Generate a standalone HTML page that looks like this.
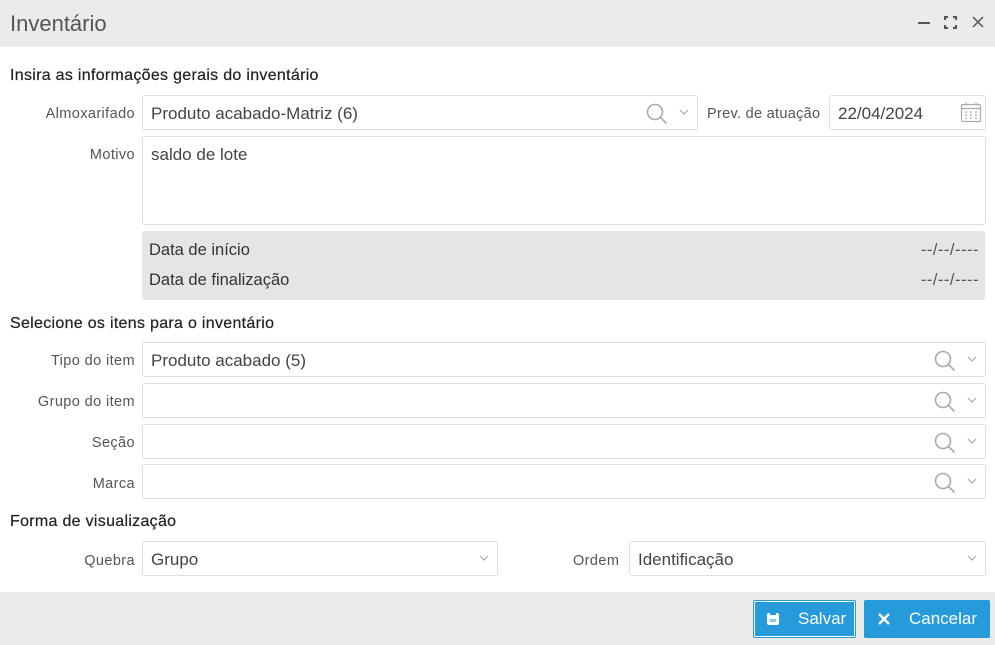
<!DOCTYPE html>
<html><head><meta charset="utf-8"><style>
*{box-sizing:border-box;margin:0;padding:0}
body{width:995px;height:645px;background:#fff;font-family:"Liberation Sans",sans-serif;position:relative;overflow:hidden;color:#333}
.a{position:absolute}
.tb{left:0;top:0;width:995px;height:47px;background:#ebebeb}
.title{left:10px;top:11px;font-size:22px;color:#555}
.h{font-size:16px;color:#222;left:10px;letter-spacing:0.3px;-webkit-text-stroke:0.2px #222}
.lbl{font-size:14.5px;color:#555;text-align:right;width:135px;left:0;letter-spacing:0.4px;margin-top:2px}
.in{border:1px solid #ddd;border-radius:3px;background:#fff;font-size:17px;color:#444;padding:8px 8px 0;height:35px}
.ic{position:absolute;top:6px}
.gray{background:#e5e5e5;border-radius:3px;left:142px;top:231px;width:843px;height:69px;font-size:16.5px;color:#333}
.ft{left:0;top:592px;width:995px;height:53px;background:#ebebeb}
.btn{background:#259bdb;color:#fff;font-size:17px;height:38px;top:600px;display:flex;align-items:center;border-radius:2px}
</style></head><body>
<div class="a tb"></div>
<div class="a title">Inventário</div>
<div class="a" style="left:918px;top:22px;width:12px;height:2px;background:#555"></div>
<svg class="a" style="left:944px;top:16px" width="13" height="13" viewBox="0 0 13 13" fill="none" stroke="#555" stroke-width="2"><path d="M1 4V1h3M9 1h3v3M12 9v3H9M4 12H1V9"/></svg>
<svg class="a" style="left:972px;top:16px" width="12" height="12" viewBox="0 0 12 12" stroke="#555" stroke-width="1.5"><path d="M1 1l10 10M11 1L1 11"/></svg>

<div class="a h" style="top:67px">Insira as informações gerais do inventário</div>
<div class="a lbl" style="top:104px">Almoxarifado</div>
<div class="a in" style="left:142px;top:95px;width:556px">Produto acabado-Matriz (6)
<svg class="ic" style="right:28px" width="24" height="24" viewBox="0 0 24 24" fill="none" stroke="#aaa" stroke-width="1.6"><circle cx="10" cy="10" r="7.5"/><path d="M15.5 15.5l6 6"/></svg>
<svg class="ic" style="right:8px;top:13px" width="10" height="6" viewBox="0 0 10 6" fill="none" stroke="#aaa" stroke-width="1.2"><path d="M1 1l4 4 4-4"/></svg></div>
<div class="a" style="left:707px;top:106px;font-size:14.5px;color:#555;letter-spacing:0.3px">Prev. de atuação</div>
<div class="a in" style="left:829px;top:95px;width:157px">22/04/2024
<svg class="ic" style="right:3px;top:5px" width="22" height="22" viewBox="0 0 22 22" fill="none" stroke="#aaa" stroke-width="1.2"><rect x="1.5" y="3.5" width="19" height="17" rx="1.5"/><path d="M1.5 7.5h19M6 1.5v3M16 1.5v3"/><path d="M5 11h2M10 11h2M15 11h2M5 14h2M10 14h2M15 14h2M5 17h2M10 17h2M15 17h2"/></svg></div>
<div class="a lbl" style="top:145px">Motivo</div>
<div class="a in" style="left:142px;top:136px;width:844px;height:89px">saldo de lote</div>
<div class="a gray">
<div class="a" style="left:7px;top:10px">Data de início</div><div class="a" style="right:6px;top:10px;color:#555;letter-spacing:0.5px">--/--/----</div>
<div class="a" style="left:7px;top:40px">Data de finalização</div><div class="a" style="right:6px;top:40px;color:#555;letter-spacing:0.5px">--/--/----</div>
</div>

<div class="a h" style="top:315px">Selecione os itens para o inventário</div>
<div class="a lbl" style="top:351px">Tipo do item</div>
<div class="a lbl" style="top:392px">Grupo do item</div>
<div class="a lbl" style="top:433px">Seção</div>
<div class="a lbl" style="top:474px">Marca</div>
<div class="a in" style="left:142px;top:342px;width:844px">Produto acabado (5)<svg class="ic" style="right:28px" width="24" height="24" viewBox="0 0 24 24" fill="none" stroke="#aaa" stroke-width="1.6"><circle cx="10" cy="10" r="7.5"/><path d="M15.5 15.5l6 6"/></svg><svg class="ic" style="right:8px;top:13px" width="10" height="6" viewBox="0 0 10 6" fill="none" stroke="#aaa" stroke-width="1.2"><path d="M1 1l4 4 4-4"/></svg></div>
<div class="a in" style="left:142px;top:383px;width:844px"><svg class="ic" style="right:28px" width="24" height="24" viewBox="0 0 24 24" fill="none" stroke="#aaa" stroke-width="1.6"><circle cx="10" cy="10" r="7.5"/><path d="M15.5 15.5l6 6"/></svg><svg class="ic" style="right:8px;top:13px" width="10" height="6" viewBox="0 0 10 6" fill="none" stroke="#aaa" stroke-width="1.2"><path d="M1 1l4 4 4-4"/></svg></div>
<div class="a in" style="left:142px;top:424px;width:844px"><svg class="ic" style="right:28px" width="24" height="24" viewBox="0 0 24 24" fill="none" stroke="#aaa" stroke-width="1.6"><circle cx="10" cy="10" r="7.5"/><path d="M15.5 15.5l6 6"/></svg><svg class="ic" style="right:8px;top:13px" width="10" height="6" viewBox="0 0 10 6" fill="none" stroke="#aaa" stroke-width="1.2"><path d="M1 1l4 4 4-4"/></svg></div>
<div class="a in" style="left:142px;top:464px;width:844px"><svg class="ic" style="right:28px" width="24" height="24" viewBox="0 0 24 24" fill="none" stroke="#aaa" stroke-width="1.6"><circle cx="10" cy="10" r="7.5"/><path d="M15.5 15.5l6 6"/></svg><svg class="ic" style="right:8px;top:13px" width="10" height="6" viewBox="0 0 10 6" fill="none" stroke="#aaa" stroke-width="1.2"><path d="M1 1l4 4 4-4"/></svg></div>

<div class="a h" style="top:513px">Forma de visualização</div>
<div class="a lbl" style="top:551px">Quebra</div>
<div class="a in" style="left:142px;top:541px;width:356px">Grupo<svg class="ic" style="right:8px;top:13px" width="10" height="6" viewBox="0 0 10 6" fill="none" stroke="#aaa" stroke-width="1.2"><path d="M1 1l4 4 4-4"/></svg></div>
<div class="a" style="left:573px;top:553px;font-size:14.5px;color:#555;letter-spacing:0.4px">Ordem</div>
<div class="a in" style="left:629px;top:541px;width:357px">Identificação<svg class="ic" style="right:8px;top:13px" width="10" height="6" viewBox="0 0 10 6" fill="none" stroke="#aaa" stroke-width="1.2"><path d="M1 1l4 4 4-4"/></svg></div>

<div class="a ft"></div>
<div class="a btn" style="left:753px;width:103px;border:1px solid #259bdb;box-shadow:inset 0 0 0 1px #fff">
<svg style="margin-left:11px" width="16" height="16" viewBox="0 0 16 16"><path d="M2 4a2 2 0 012-2h8a2 2 0 012 2v8a2 2 0 01-2 2H4a2 2 0 01-2-2z" fill="#fff"/><rect x="4.5" y="8" width="7" height="3" rx="1" fill="#8ccbee"/><rect x="5" y="2" width="6" height="2" fill="#259bdb"/></svg>
<span style="margin-left:17px">Salvar</span></div>
<div class="a btn" style="left:864px;width:126px">
<svg style="margin-left:14px" width="12" height="12" viewBox="0 0 12 12" stroke="#fff" stroke-width="2.4"><path d="M1 1l10 10M11 1L1 11"/></svg>
<span style="margin-left:19px">Cancelar</span></div>
</body></html>
